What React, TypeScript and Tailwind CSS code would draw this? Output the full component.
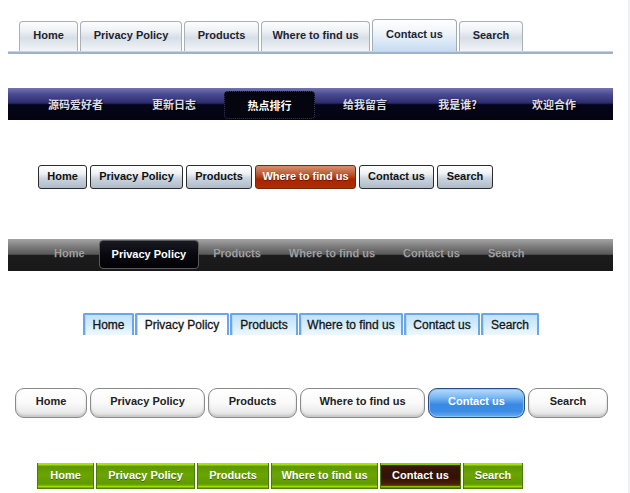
import React from "react";

const items = ["Home", "Privacy Policy", "Products", "Where to find us", "Contact us", "Search"];

// menu 1: light grey tabs on a blue-grey rule
const TabsGrey = () => {
  const widths = ["w-[59px]", "w-[102px]", "w-[75px]", "w-[109px]", "w-[85px]", "w-[64px]"];
  return (
    <div className="ml-[8px] w-[605px]">
      <div className="flex items-end gap-[2px] pl-[11px] h-[32px]">
        {items.map((t, i) =>
          i === 4 ? (
            <div
              key={t}
              className={`${widths[i]} h-[32px] pb-[3px] flex items-center justify-center rounded-t-[4px] border border-b-0 border-[#a3abb5] bg-[linear-gradient(to_bottom,#ffffff_0%,#f2f6fa_35%,#dbe8f6_70%,#c5dcf4_100%)] text-[11px] font-bold text-[#1c2430]`}
            >
              {t}
            </div>
          ) : (
            <div
              key={t}
              className={`${widths[i]} h-[30px] pb-[3px] flex items-center justify-center rounded-t-[4px] border border-b-0 border-[#a8b0b8] bg-[linear-gradient(to_bottom,#fcfdfe_0%,#eef1f5_30%,#d7dee7_55%,#e6ebf0_80%,#f3f5f8_100%)] text-[11px] font-bold text-[#1c2430]`}
            >
              {t}
            </div>
          )
        )}
      </div>
      <div className="h-[3px] bg-[#a0b2c8] border-t border-[#c9d4e0]" />
    </div>
  );
};

// menu 2: navy bar with chinese labels
const NavyBar = () => {
  const labels = ["源码爱好者", "更新日志", "热点排行", "给我留言", "我是谁?", "欢迎合作"];
  const widths = ["w-[97px]", "w-[100px]", "w-[91px]", "w-[100px]", "w-[85px]", "w-[108px]"];
  return (
    <div className="ml-[8px] w-[605px] h-[32px] flex pl-[19px] bg-[linear-gradient(to_bottom,#7474b0_0%,#4a4a90_20%,#2e2e72_45%,#18184e_50%,#05051a_52%,#030310_100%)] font-['Noto_Sans_CJK_SC',sans-serif]">
      {labels.map((t, i) =>
        i === 2 ? (
          <div key={t} className={`${widths[i]} h-full pt-[3px] pb-[1px]`}>
            <div className="h-full flex items-center justify-center rounded-[4px] border border-dotted border-[#3a3a5a] bg-[#05050f] text-[11px] font-bold text-white [text-shadow:1px_1px_0_#000]">
              {t}
            </div>
          </div>
        ) : (
          <div
            key={t}
            className={`${widths[i]} h-full flex items-center justify-center text-[11px] font-bold text-[#dcdce6] [text-shadow:1px_1px_1px_#000]`}
          >
            {t}
          </div>
        )
      )}
    </div>
  );
};

// menu 3: glossy grey buttons, red active
const ButtonsGlossy = () => {
  const widths = ["w-[49px]", "w-[93px]", "w-[66px]", "w-[101px]", "w-[75px]", "w-[56px]"];
  return (
    <div className="flex gap-[3px] pl-[38px] h-[24px]">
      {items.map((t, i) =>
        i === 3 ? (
          <div
            key={t}
            className={`${widths[i]} h-full pb-[1px] flex items-center justify-center rounded-[3px] border border-[#6a2a10] bg-[linear-gradient(to_bottom,#d89070_0%,#c06440_30%,#b04018_50%,#a82400_60%,#b22c04_100%)] text-[11px] font-bold text-white [text-shadow:0_1px_0_#6a1a00]`}
          >
            {t}
          </div>
        ) : (
          <div
            key={t}
            className={`${widths[i]} h-full pb-[1px] flex items-center justify-center rounded-[3px] border border-[#2c2c2c] bg-[linear-gradient(to_bottom,#ffffff_0%,#eef1f4_35%,#ccd5de_55%,#aebbc8_100%)] shadow-[inset_0_1px_0_#fff] text-[11px] font-bold text-[#111]`}
          >
            {t}
          </div>
        )
      )}
    </div>
  );
};

// menu 4: dark grey bar
const DarkBar = () => (
  <div className="ml-[8px] w-[605px] h-[32px] flex pl-[32px] bg-[linear-gradient(to_bottom,#a4a4a4_0%,#7a7a7a_25%,#585858_48%,#1c1c1c_50%,#181818_100%)]">
    {items.map((t, i) =>
      i === 1 ? (
        <div key={t} className="h-full pt-[1px] pb-[2px]">
          <div className="h-full flex items-center px-[12px] pb-[1px] rounded-[4px] border border-[#5a5a5a] bg-[linear-gradient(to_bottom,#1a1a22_0%,#08080e_50%,#020206_100%)] text-[11px] font-bold text-white">
            {t}
          </div>
        </div>
      ) : (
        <div key={t} className="h-full flex items-center px-[14px] pb-[3px] text-[11px] font-bold text-[#a0a0a0] [text-shadow:0_1px_0_#3a3a3a]">
          {t}
        </div>
      )
    )}
  </div>
);

// menu 5: light blue tabs
const TabsBlue = () => {
  const widths = ["w-[51px]", "w-[94px]", "w-[68px]", "w-[104px]", "w-[76px]", "w-[58px]"];
  return (
    <div className="flex gap-[1px] pl-[83px] h-[22px] items-end">
      {items.map((t, i) => (
        <div
          key={t}
          className={`${widths[i]} h-[22px] flex items-center justify-center rounded-t-[2px] border-2 border-b-0 border-[#6aa6e8] shadow-[inset_1px_0_0_#b8d8f8] text-[12px] text-[#151515] [-webkit-text-stroke:0.3px_#151515] ${
            i === 1
              ? "bg-[linear-gradient(to_bottom,#eef7fd_0%,#ffffff_60%)]"
              : "bg-[linear-gradient(to_bottom,#bfe2f8_0%,#d4ecfb_50%,#eef8fe_100%)]"
          }`}
        >
          {t}
        </div>
      ))}
    </div>
  );
};

// menu 6: rounded pills, blue active
const Pills = () => {
  const widths = ["w-[72px]", "w-[115px]", "w-[89px]", "w-[125px]", "w-[97px]", "w-[80px]"];
  return (
    <div className="flex gap-[3px] pl-[15px] h-[30px]">
      {items.map((t, i) =>
        i === 4 ? (
          <div
            key={t}
            className={`${widths[i]} h-full pb-[3px] flex items-center justify-center rounded-[9px] border border-[#2a4c88] bg-[linear-gradient(to_bottom,#b8dcfc_0%,#7ab8f4_30%,#3a8ae4_55%,#3c8ce6_80%,#6aaef2_100%)] shadow-[inset_0_0_0_1px_#8cc4f8] text-[11px] font-bold text-white`}
          >
            {t}
          </div>
        ) : (
          <div
            key={t}
            className={`${widths[i]} h-full pb-[3px] flex items-center justify-center rounded-[9px] border border-[#8a8a8a] bg-[linear-gradient(to_bottom,#ffffff_0%,#fafafa_50%,#ececec_80%,#dcdcdc_100%)] shadow-[inset_0_-2px_2px_#c8c8c8] text-[11px] font-bold text-[#222]`}
          >
            {t}
          </div>
        )
      )}
    </div>
  );
};

// menu 7: lime green buttons
const GreenButtons = () => {
  const widths = ["w-[57px]", "w-[99px]", "w-[72px]", "w-[107px]", "w-[81px]", "w-[60px]"];
  return (
    <div className="flex gap-[2px] pl-[37px] h-[26px]">
      {items.map((t, i) => (
        <div
          key={t}
          className={`${widths[i]} h-full pb-[2px] flex items-center justify-center border-x border-[#4a7c00] text-[11px] font-bold text-white ${
            i === 4
              ? "bg-[linear-gradient(to_bottom,#8ac800_0%,#8ac800_7%,#3a1606_10%,#321205_55%,#4a1c08_80%,#7a3a10_88%,#8ac800_90%,#2a4a00_100%)]"
              : "bg-[linear-gradient(to_bottom,#a6e400_0%,#a6e400_7%,#5e9600_12%,#6aa600_45%,#609a00_80%,#72b000_86%,#a4e400_90%,#3c6a00_100%)] [text-shadow:0_1px_0_#3a6000]"
          }`}
        >
          {t}
        </div>
      ))}
    </div>
  );
};

export default function App() {
  return (
    <div className="w-[630px] h-[493px] overflow-hidden bg-white border-r-2 border-[#eceff3] font-['Liberation_Sans',Arial,sans-serif]">
      <div className="flex flex-col pt-[19px]">
        <TabsGrey />
        <div className="mt-[34px]">
          <NavyBar />
        </div>
        <div className="mt-[45px]">
          <ButtonsGlossy />
        </div>
        <div className="mt-[50px]">
          <DarkBar />
        </div>
        <div className="mt-[42px]">
          <TabsBlue />
        </div>
        <div className="mt-[53px]">
          <Pills />
        </div>
        <div className="mt-[45px]">
          <GreenButtons />
        </div>
      </div>
    </div>
  );
}
